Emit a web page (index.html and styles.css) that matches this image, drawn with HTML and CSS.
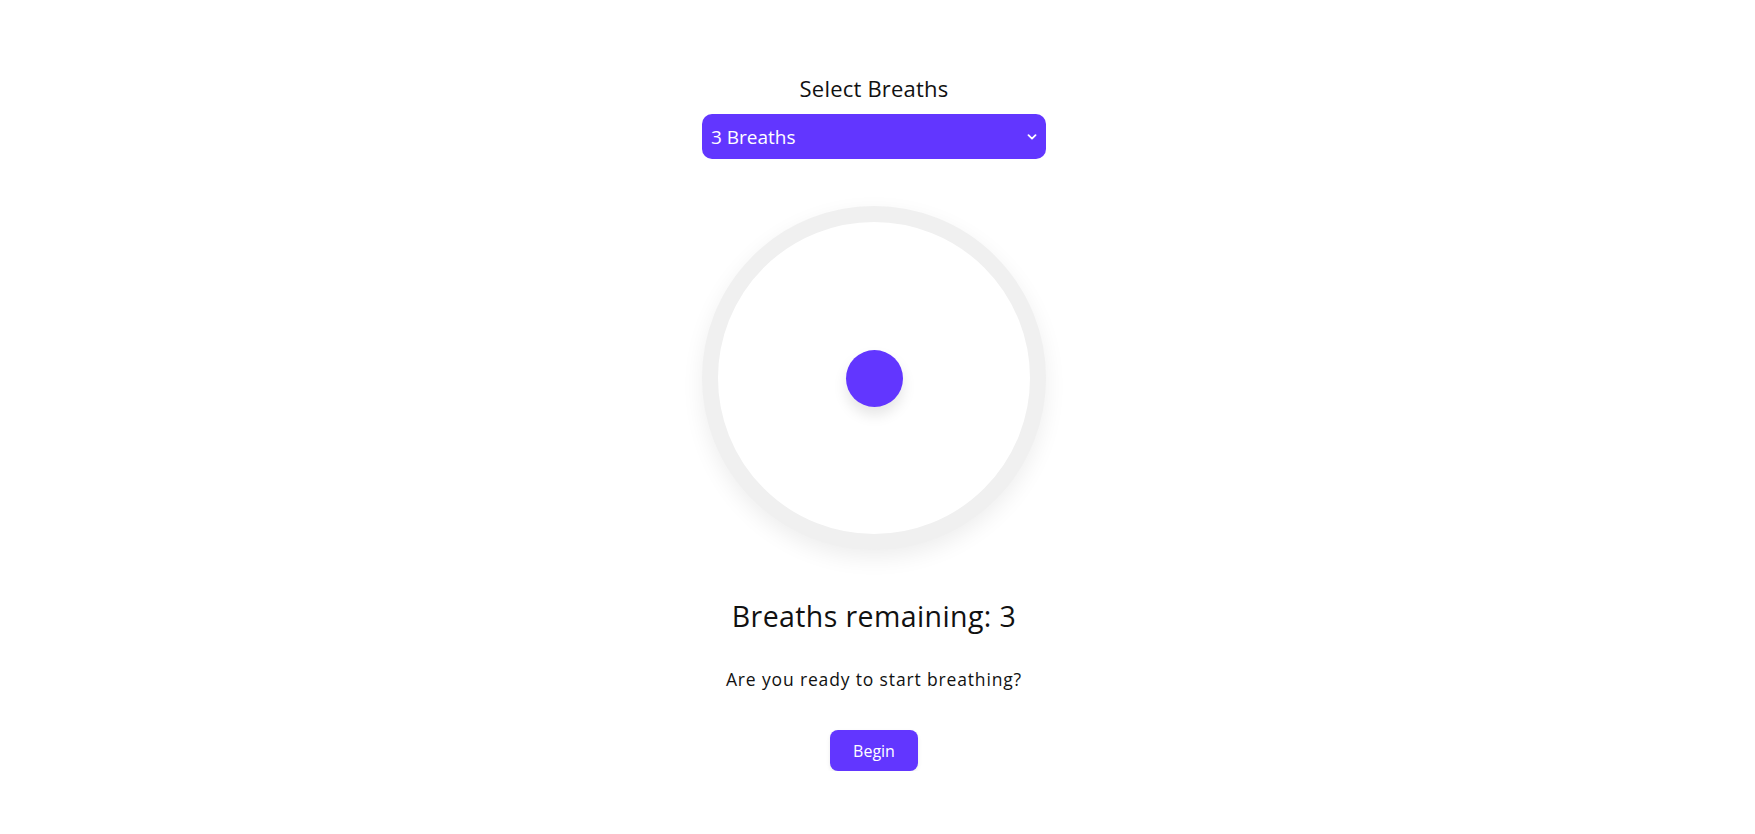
FILE: index.html
```html
<!DOCTYPE html>
<html lang="en">
<head>
<meta charset="utf-8">
<title>Breathing</title>
<link rel="stylesheet" href="styles.css">
</head>
<body>
<main class="app">
  <label class="select-label" for="breaths">Select Breaths</label>
  <div class="select-wrap">
    <select id="breaths" class="select">
      <option>3 Breaths</option>
      <option>5 Breaths</option>
      <option>7 Breaths</option>
    </select>
    <svg class="chevron" width="10" height="6" viewBox="0 0 10 6"><path d="M1.5 1.2 L5 4.6 L8.5 1.2" fill="none" stroke="#fff" stroke-width="1.8" stroke-linecap="round" stroke-linejoin="round"/></svg>
  </div>
  <div class="ring">
    <div class="dot"></div>
  </div>
  <h1 class="remaining">Breaths remaining: 3</h1>
  <p class="prompt">Are you ready to start breathing?</p>
  <button class="begin">Begin</button>
</main>
</body>
</html>
```

FILE: styles.css
```css
* { box-sizing: border-box; }
html, body { margin: 0; padding: 0; background: #fff; }
body {
  font-family: "Open Sans", "Noto Sans", sans-serif;
  color: #111;
}
.app {
  display: flex;
  flex-direction: column;
  align-items: center;
  padding-top: 74px;
  padding-right: 7px;
}
.select-label {
  font-size: 22px;
  line-height: 28px;
  letter-spacing: 0.2px;
  color: #111;
}
.select-wrap {
  position: relative;
  margin-top: 12px;
  width: 344px;
  height: 45px;
}
.select {
  appearance: none;
  -webkit-appearance: none;
  width: 100%;
  height: 100%;
  border: none;
  border-radius: 10px;
  background: #6236ff;
  color: #fff;
  font-family: inherit;
  font-size: 19px;
  padding: 0 9px;
  outline: none;
}
.chevron {
  position: absolute;
  right: 9px;
  top: 20px;
}
.ring {
  margin-top: 47px;
  width: 344px;
  height: 344px;
  border-radius: 50%;
  border: 16px solid #f0f0f0;
  background: #fff;
  box-shadow: 0 8px 22px rgba(0,0,0,0.07);
  display: flex;
  align-items: center;
  justify-content: center;
}
.dot {
  width: 57px;
  height: 57px;
  border-radius: 50%;
  background: #6236ff;
  box-shadow: 0 8px 14px rgba(0,0,0,0.1);
}
.remaining {
  margin: 48px 0 0;
  font-size: 28.5px;
  font-weight: 400;
  line-height: 36px;
  letter-spacing: 0.4px;
  color: #111;
}
.prompt {
  margin: 33px 0 0;
  font-size: 17.5px;
  line-height: 24px;
  letter-spacing: 0.85px;
  color: #111;
}
.begin {
  margin-top: 39px;
  width: 88px;
  height: 41px;
  border: none;
  border-radius: 8px;
  background: #6236ff;
  color: #fff;
  font-family: inherit;
  font-size: 16px;
  font-weight: 500;
  box-shadow: 0 2px 4px rgba(0,0,0,0.08);
}
```
